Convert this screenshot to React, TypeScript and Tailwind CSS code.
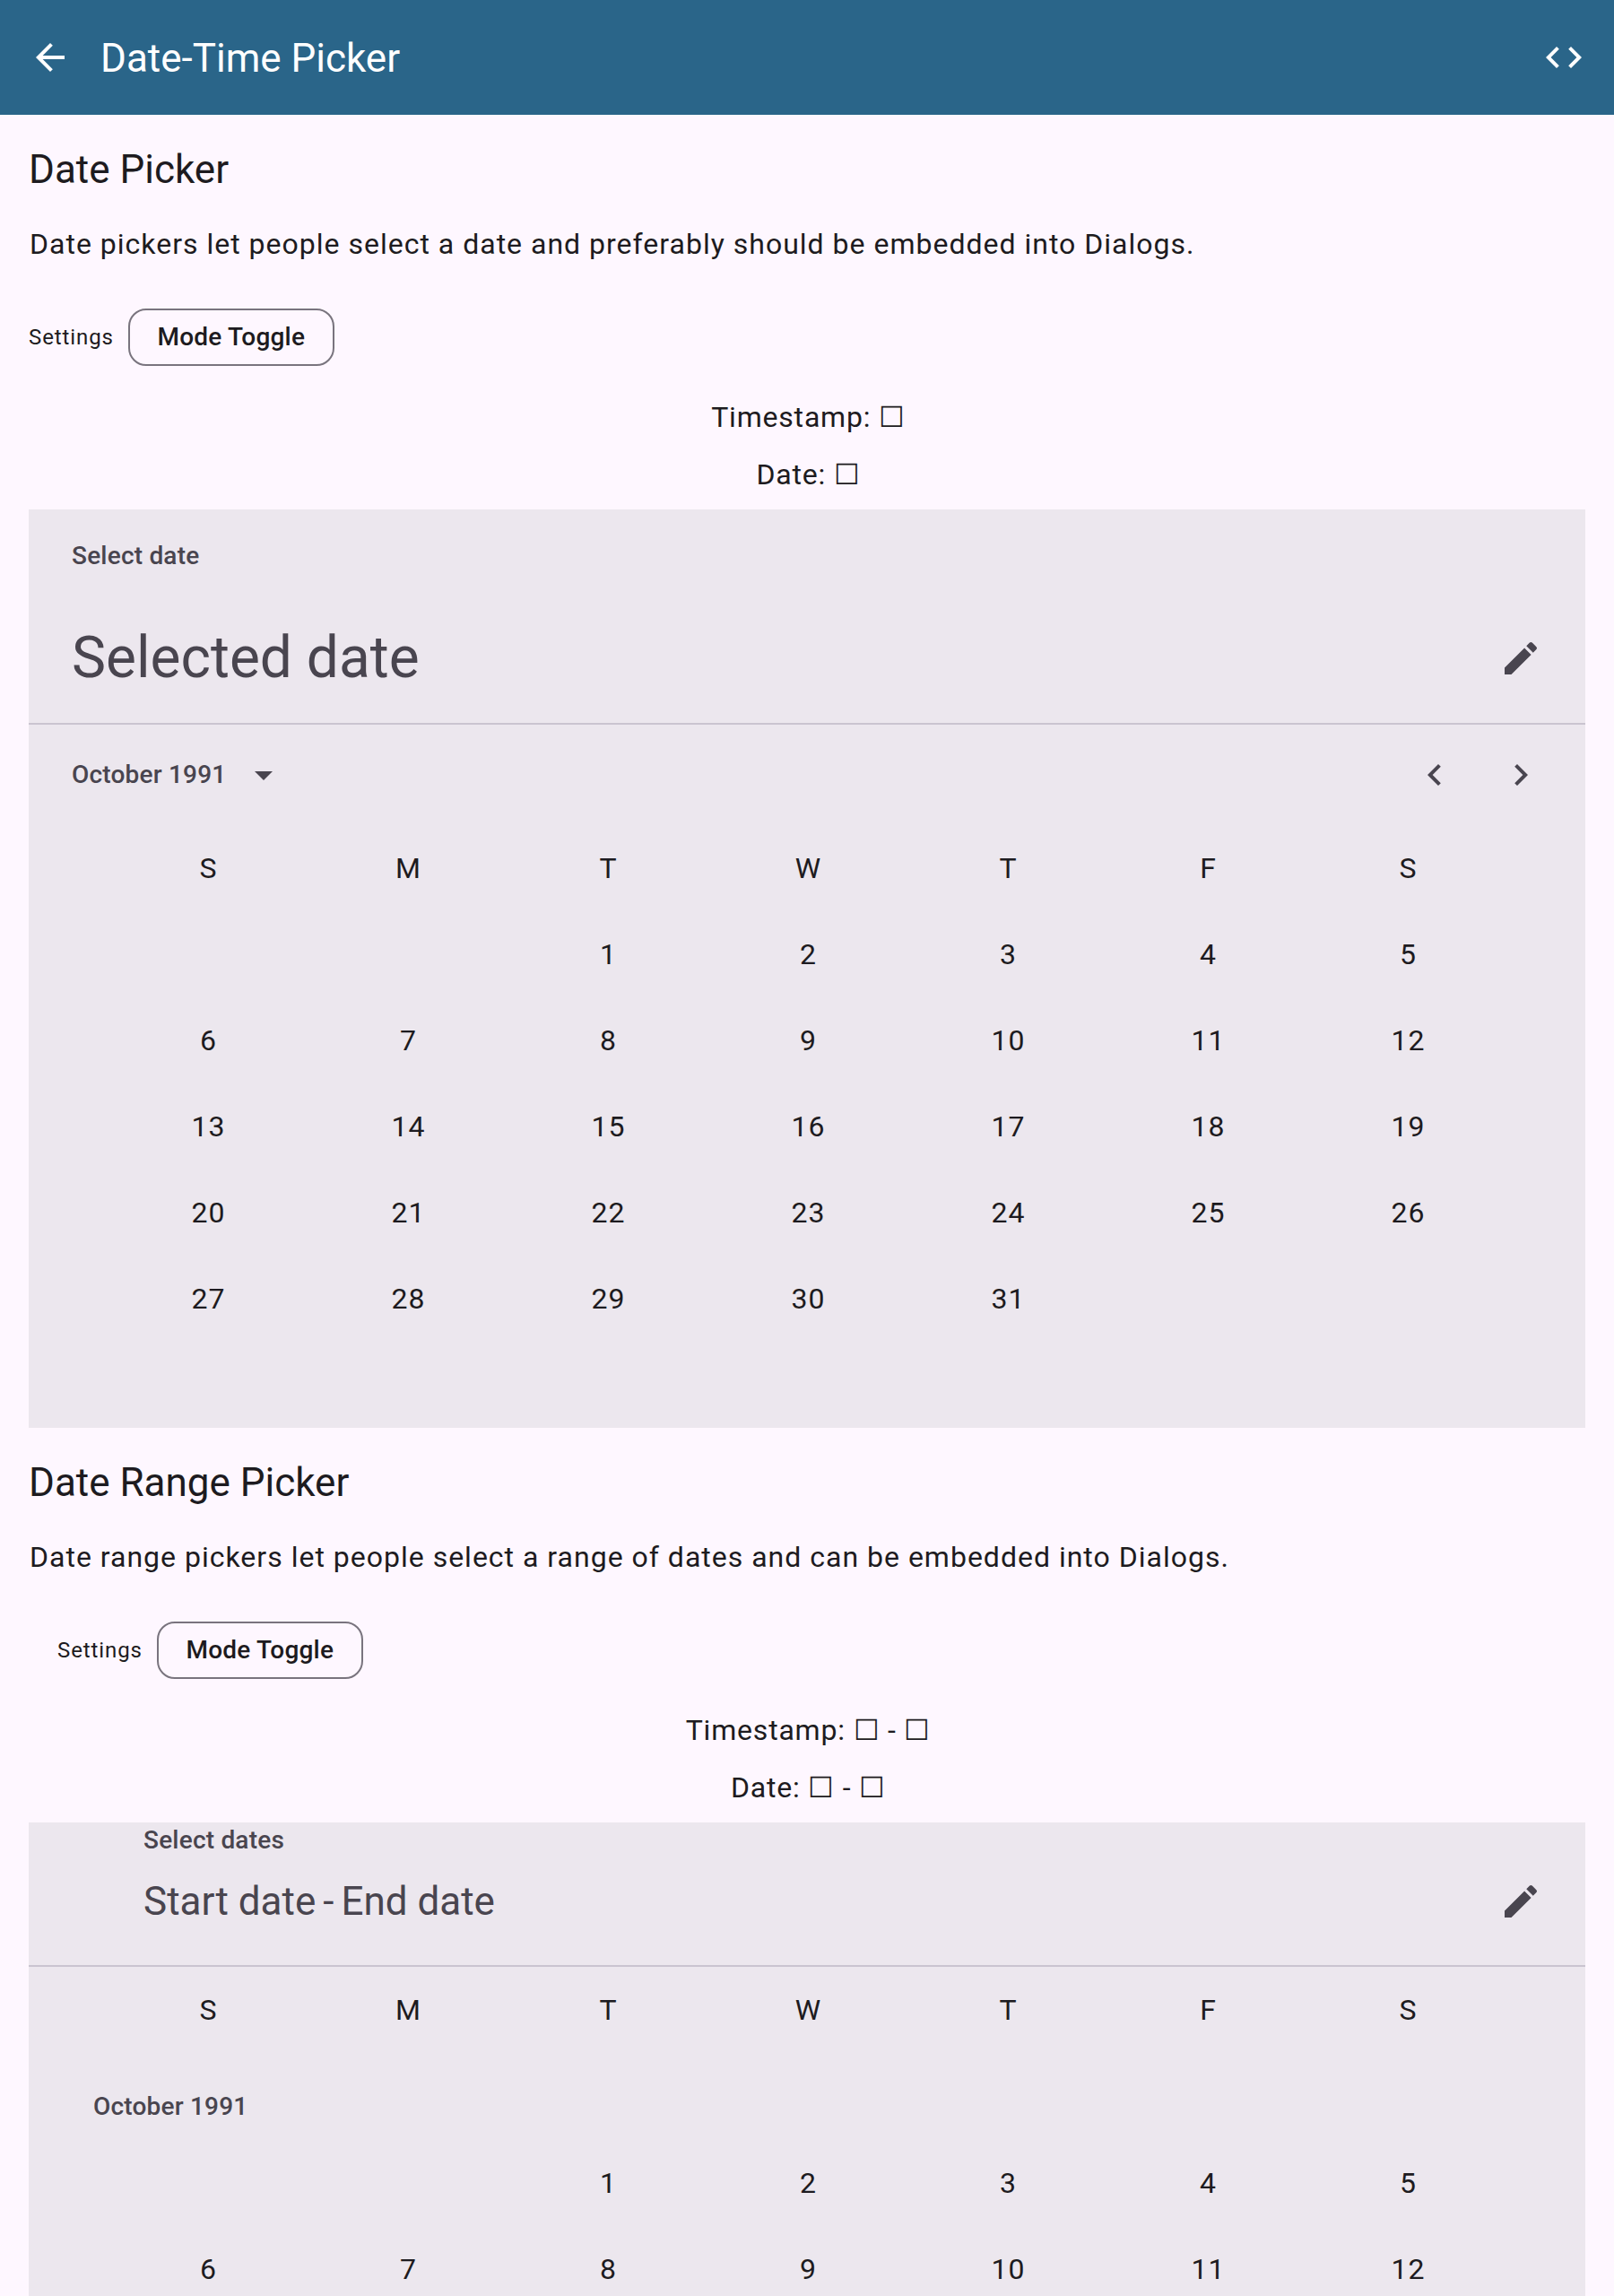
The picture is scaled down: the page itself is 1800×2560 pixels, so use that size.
const WEEKDAYS = ["S", "M", "T", "W", "T", "F", "S"];
const WEEKS = [
  ["", "", "1", "2", "3", "4", "5"],
  ["6", "7", "8", "9", "10", "11", "12"],
  ["13", "14", "15", "16", "17", "18", "19"],
  ["20", "21", "22", "23", "24", "25", "26"],
  ["27", "28", "29", "30", "31", "", ""],
];

function Pencil() {
  return (
    <svg width="48" height="48" viewBox="0 0 24 24" fill="#49454f">
      <path d="M3 17.25V21h3.75L17.81 9.94l-3.75-3.75L3 17.25zM20.71 7.04a1 1 0 0 0 0-1.41l-2.34-2.34a1 1 0 0 0-1.41 0l-1.83 1.83 3.75 3.75 1.83-1.83z" />
    </svg>
  );
}

function Row({ days }: { days: string[] }) {
  return (
    <div className="grid grid-cols-7 h-[96px] items-center text-center text-[32px] tracking-[1px] text-[#1d1b20]">
      {days.map((d, i) => (
        <div key={i}>{d}</div>
      ))}
    </div>
  );
}

function Intro({ title, text, indent }: { title: string; text: string; indent: string }) {
  return (
    <>
      <h2 className="pl-8 h-[94px] shrink-0 pt-[33px] text-[44px] leading-[56px] text-[#1d1b20]">{title}</h2>
      <p className="pl-[33px] mt-[26px] text-[32px] leading-[48px] tracking-[1px] text-[#1d1b20]">{text}</p>
      <div className={`flex items-center mt-[48px] ${indent}`}>
        <span className="text-[24px] leading-[32px] tracking-[0.9px] text-[#1d1b20]">Settings</span>
        <button className="ml-[16px] h-[64px] w-[230px] rounded-[20px] border-2 border-[#79747e] text-[28px] font-medium tracking-[0.2px] text-[#1d1b20]">
          Mode Toggle
        </button>
      </div>
    </>
  );
}

export default function App() {
  return (
    <div className="flex flex-col h-[2560px] overflow-hidden bg-[#fef7ff] font-['Roboto',sans-serif]">
      <header className="flex items-center h-[128px] shrink-0 bg-[#2a6589] text-white">
        <svg className="ml-[32px]" width="48" height="48" viewBox="0 0 24 24" fill="white">
          <path d="M20 11H7.83l5.59-5.59L12 4l-8 8 8 8 1.41-1.41L7.83 13H20v-2z" />
        </svg>
        <h1 className="ml-[32px] flex-1 pt-[2px] text-[44px] leading-[56px]">Date-Time Picker</h1>
        <svg className="mr-[32px]" width="48" height="48" viewBox="0 0 24 24" fill="white">
          <path d="M9.4 16.6L4.8 12l4.6-4.6L8 6l-6 6 6 6 1.4-1.4zm5.2 0l4.6-4.6-4.6-4.6L16 6l6 6-6 6-1.4-1.4z" />
        </svg>
      </header>

      <Intro
        title="Date Picker"
        text="Date pickers let people select a date and preferably should be embedded into Dialogs."
        indent="pl-8"
      />
      <div className="mt-[33px] pl-[3px] text-center text-[32px] leading-[48px] tracking-[0.8px] text-[#1d1b20]">
        <p>Timestamp: ☐</p>
        <p className="mt-4">Date: ☐</p>
      </div>

      <section className="mx-8 mt-[15px] h-[1024px] shrink-0 bg-[#ece7ee]">
        <div className="h-[240px] border-b-2 border-[#cac4d0] px-[48px]">
          <p className="pt-[32px] text-[28px] leading-[40px] font-medium tracking-[0.2px] text-[#49454f]">Select date</p>
          <div className="flex items-center justify-between mt-[54px]">
            <p className="text-[64px] leading-[80px] text-[#49454f]">Selected date</p>
            <Pencil />
          </div>
        </div>
        <div className="flex items-center h-[112px] px-[48px] text-[#49454f]">
          <span className="text-[28px] font-medium tracking-[0.2px]">October 1991</span>
          <svg className="ml-[18px]" width="48" height="48" viewBox="0 0 24 24" fill="#49454f">
            <path d="M7 10l5 5 5-5z" />
          </svg>
          <div className="flex-1" />
          <svg width="48" height="48" viewBox="0 0 24 24" fill="#49454f">
            <path d="M15.41 7.41L14 6l-6 6 6 6 1.41-1.41L10.83 12z" />
          </svg>
          <svg className="ml-[48px]" width="48" height="48" viewBox="0 0 24 24" fill="#49454f">
            <path d="M10 6L8.59 7.41 13.17 12l-4.58 4.59L10 18l6-6z" />
          </svg>
        </div>
        <div className="ml-[89px] mr-[86px]">
          <Row days={WEEKDAYS} />
          {WEEKS.map((w, i) => (
            <Row key={i} days={w} />
          ))}
        </div>
      </section>

      <Intro
        title="Date Range Picker"
        text="Date range pickers let people select a range of dates and can be embedded into Dialogs."
        indent="pl-16"
      />
      <div className="mt-[33px] pl-[3px] text-center text-[32px] leading-[48px] tracking-[0.8px] text-[#1d1b20]">
        <p>Timestamp: ☐ - ☐</p>
        <p className="mt-4">Date: ☐ - ☐</p>
      </div>

      <section className="mx-8 mt-[15px] flex-1 min-h-0 bg-[#ece7ee]">
        <div className="h-[161px] border-b-2 border-[#cac4d0] pl-[128px] pr-[48px]">
          <p className="pt-[2px] text-[28px] leading-[36px] font-medium tracking-[0.2px] text-[#49454f]">Select dates</p>
          <div className="flex items-center justify-between mt-[22px]">
            <p className="flex gap-2 text-[44px] leading-[56px] text-[#49454f]">
              <span>Start date</span>
              <span>-</span>
              <span>End date</span>
            </p>
            <Pencil />
          </div>
        </div>
        <div className="ml-[89px] mr-[86px]">
          <Row days={WEEKDAYS} />
        </div>
        <p className="pl-[72px] h-[97px] pt-[40px] text-[28px] leading-[40px] font-medium tracking-[0.2px] text-[#49454f]">October 1991</p>
        <div className="ml-[89px] mr-[86px]">
          <Row days={WEEKS[0]} />
          <Row days={WEEKS[1]} />
        </div>
      </section>
    </div>
  );
}
